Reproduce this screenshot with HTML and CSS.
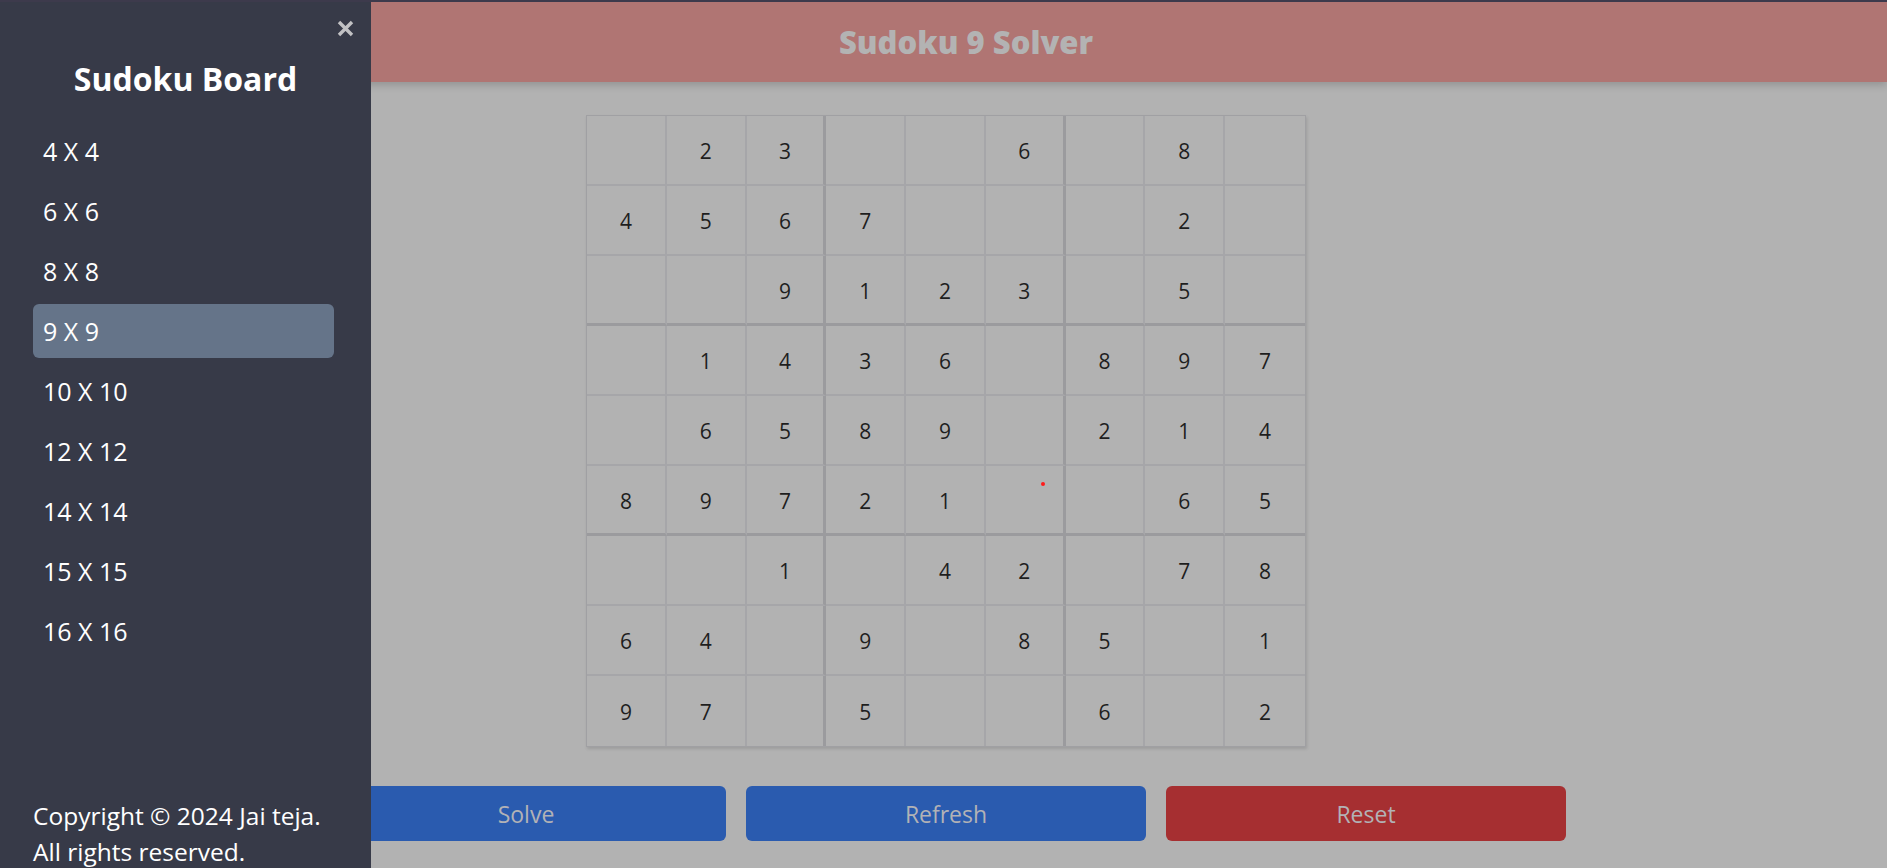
FILE: index.html
```html
<!DOCTYPE html>
<html lang="en">
<head>
<meta charset="utf-8">
<title>Sudoku 9 Solver</title>
<link rel="stylesheet" href="styles.css">
</head>
<body>
<div class="page">
  <header class="topbar"><h1 class="topbar-title">Sudoku 9 Solver</h1></header>
  <main class="main">
    <div class="board">
      <div class="cell"></div><div class="cell">2</div><div class="cell box-r">3</div><div class="cell"></div><div class="cell"></div><div class="cell box-r">6</div><div class="cell"></div><div class="cell">8</div><div class="cell last-c"></div>
      <div class="cell">4</div><div class="cell">5</div><div class="cell box-r">6</div><div class="cell">7</div><div class="cell"></div><div class="cell box-r"></div><div class="cell"></div><div class="cell">2</div><div class="cell last-c"></div>
      <div class="cell box-b"></div><div class="cell box-b"></div><div class="cell box-r box-b">9</div><div class="cell box-b">1</div><div class="cell box-b">2</div><div class="cell box-r box-b">3</div><div class="cell box-b"></div><div class="cell box-b">5</div><div class="cell last-c box-b"></div>
      <div class="cell"></div><div class="cell">1</div><div class="cell box-r">4</div><div class="cell">3</div><div class="cell">6</div><div class="cell box-r"></div><div class="cell">8</div><div class="cell">9</div><div class="cell last-c">7</div>
      <div class="cell"></div><div class="cell">6</div><div class="cell box-r">5</div><div class="cell">8</div><div class="cell">9</div><div class="cell box-r"></div><div class="cell">2</div><div class="cell">1</div><div class="cell last-c">4</div>
      <div class="cell box-b">8</div><div class="cell box-b">9</div><div class="cell box-r box-b">7</div><div class="cell box-b">2</div><div class="cell box-b">1</div><div class="cell box-r box-b"></div><div class="cell box-b"></div><div class="cell box-b">6</div><div class="cell last-c box-b">5</div>
      <div class="cell"></div><div class="cell"></div><div class="cell box-r">1</div><div class="cell"></div><div class="cell">4</div><div class="cell box-r">2</div><div class="cell"></div><div class="cell">7</div><div class="cell last-c">8</div>
      <div class="cell">6</div><div class="cell">4</div><div class="cell box-r"></div><div class="cell">9</div><div class="cell"></div><div class="cell box-r">8</div><div class="cell">5</div><div class="cell"></div><div class="cell last-c">1</div>
      <div class="cell last-r">9</div><div class="cell last-r">7</div><div class="cell box-r last-r"></div><div class="cell last-r">5</div><div class="cell last-r"></div><div class="cell box-r last-r"></div><div class="cell last-r">6</div><div class="cell last-r"></div><div class="cell last-c last-r">2</div>
      <span class="dot"></span>
    </div>
    <div class="actions">
      <button class="btn btn-blue">Solve</button>
      <button class="btn btn-blue">Refresh</button>
      <button class="btn btn-red">Reset</button>
    </div>
  </main>
</div>

<aside class="sidebar">
  <button class="close" aria-label="Close">
    <svg width="17" height="17" viewBox="0 0 17 17"><path d="M2 2 L15 15 M15 2 L2 15" stroke="#c1c1c4" stroke-width="3.4" stroke-linecap="butt"/></svg>
  </button>
  <h2 class="sidebar-title">Sudoku Board</h2>
  <nav class="menu">
    <a class="menu-item">4 X 4</a>
    <a class="menu-item">6 X 6</a>
    <a class="menu-item">8 X 8</a>
    <a class="menu-item active">9 X 9</a>
    <a class="menu-item">10 X 10</a>
    <a class="menu-item">12 X 12</a>
    <a class="menu-item">14 X 14</a>
    <a class="menu-item">15 X 15</a>
    <a class="menu-item">16 X 16</a>
  </nav>
  <footer class="copyright">Copyright © 2024 Jai teja.<br>All rights reserved.</footer>
</aside>
<div class="topline"></div>
</body>
</html>
```
FILE: styles.css
```css
* { box-sizing: border-box; }
html, body { margin: 0; padding: 0; }
body {
  width: 1887px;
  height: 868px;
  overflow: hidden;
  background: #b2b2b2;
  font-family: "Open Sans", "DejaVu Sans", sans-serif;
}
.page {
  display: flex;
  flex-direction: column;
  height: 868px;
}
.topline {
  position: fixed;
  left: 0; top: 0; right: 0;
  height: 2px;
  background: #3d3a4c;
}
.topbar {
  height: 82px;
  padding-top: 2px;
  background: #b07573;
  display: flex;
  align-items: center;
  justify-content: center;
  padding-left: 45px;
  box-shadow: 0 3px 8px rgba(0,0,0,0.18);
}
.topbar-title {
  margin: 0;
  font-size: 31px;
  font-weight: 800;
  color: #b3b3b3;
  letter-spacing: 0;
}
.main {
  display: flex;
  flex-direction: column;
  align-items: center;
  padding-top: 33px;
  padding-left: 5px;
}
.board {
  position: relative;
  width: 720px;
  height: 632px;
  display: grid;
  grid-template-columns: repeat(9, 1fr);
  grid-template-rows: repeat(9, 1fr);
  border: 1px solid #a0a0a3;
  box-shadow: 1px 2px 3px rgba(0,0,0,0.12);
}
.cell {
  display: flex;
  align-items: center;
  justify-content: center;
  border-right: 2px solid #a6a6a9;
  border-bottom: 2px solid #a6a6a9;
  font-size: 21px;
  color: #1e1e1e;
  padding-top: 2px;
}
.box-r { border-right: 3px solid #9b9b9e; }
.box-b { border-bottom: 3px solid #9b9b9e; }
.last-c { border-right: none; }
.last-r { border-bottom: none; }
.dot {
  position: absolute;
  left: 454px;
  top: 366px;
  width: 4px;
  height: 4px;
  border-radius: 50%;
  background: #ff1a1a;
}
.actions {
  display: flex;
  gap: 20px;
  margin-top: 39px;
}
.btn {
  width: 400px;
  height: 55px;
  border: none;
  border-radius: 6px;
  font-family: inherit;
  font-size: 23px;
  color: #b2b2b6;
  padding: 0;
}
.btn-blue { background: #2a5baf; }
.btn-red { background: #a62f31; }

.sidebar {
  position: fixed;
  left: 0;
  top: 0;
  width: 371px;
  height: 868px;
  background: #373a48;
  display: flex;
  flex-direction: column;
  padding: 0 0 0 33px;
}
.close {
  position: absolute;
  left: 337px;
  top: 20px;
  background: none;
  border: none;
  padding: 0;
  line-height: 0;
}
.sidebar-title {
  margin: 57px 0 0 -33px;
  text-align: center;
  font-size: 32px;
  font-weight: 700;
  color: #ffffff;
  line-height: 44px;
}
.menu {
  display: flex;
  flex-direction: column;
  gap: 6px;
  margin-top: 23px;
}
.menu-item {
  width: 301px;
  height: 54px;
  display: flex;
  align-items: center;
  padding-left: 10px;
  border-radius: 6px;
  font-size: 25px;
  color: #ffffff;
}
.menu-item.active { background: #657489; }
.copyright {
  margin-top: auto;
  font-size: 24.5px;
  line-height: 36px;
  color: #ffffff;
  margin-bottom: -2px;
}
```
